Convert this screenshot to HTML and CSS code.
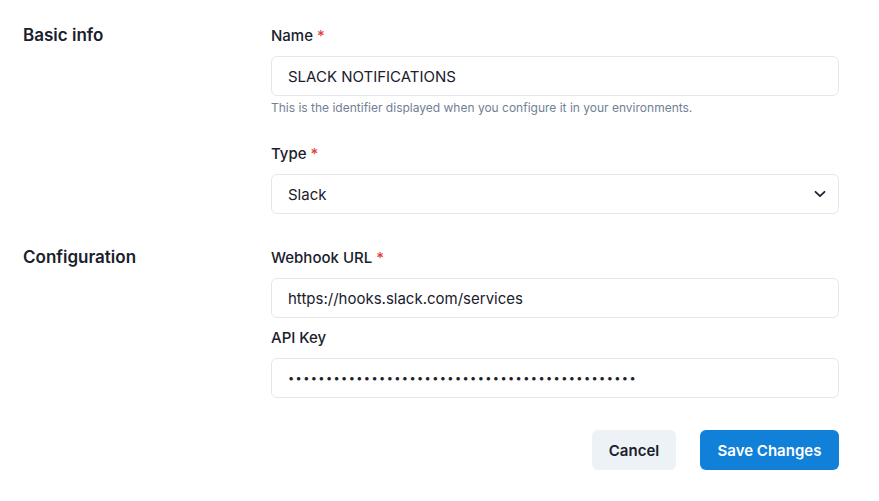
FILE: index.html
```html
<!DOCTYPE html>
<html>
<head>
<meta charset="utf-8">
<link rel="stylesheet" href="styles.css">
</head>
<body>
<form class="form">
  <section class="section">
    <h2 class="section-title">Basic info</h2>
    <div class="fields">
      <div class="field">
        <label class="label">Name <span class="req">*</span></label>
        <input class="input" type="text" value="SLACK NOTIFICATIONS">
        <p class="help">This is the identifier displayed when you configure it in your environments.</p>
      </div>
      <div class="field field-spaced">
        <label class="label">Type <span class="req">*</span></label>
        <div class="select">
          <span>Slack</span>
          <svg class="chev" width="12" height="8" viewBox="0 0 12 8"><path d="M1.5 1.8 6 6.2l4.5-4.4" fill="none" stroke="#1f2430" stroke-width="1.8" stroke-linecap="round" stroke-linejoin="round"/></svg>
        </div>
      </div>
    </div>
  </section>
  <section class="section section-2">
    <h2 class="section-title">Configuration</h2>
    <div class="fields">
      <div class="field">
        <label class="label">Webhook URL <span class="req">*</span></label>
        <input class="input" type="text" value="https://hooks.slack.com/services">
      </div>
      <div class="field field-tight">
        <label class="label">API Key</label>
        <input class="input pw" type="password" value="aaaaaaaaaaaaaaaaaaaaaaaaaaaaaaaaaaaaaaaaaaaaaa">
      </div>
    </div>
  </section>
  <div class="actions">
    <button type="button" class="btn btn-cancel">Cancel</button>
    <button type="button" class="btn btn-save">Save Changes</button>
  </div>
</form>
</body>
</html>
```
FILE: styles.css
```css
* { box-sizing: border-box; }
body {
  margin: 0;
  background: #ffffff;
  font-family: Inter, "Noto Sans", sans-serif;
  color: #1a202c;
}
.form {
  padding: 26px 40px 0 23px;
}
.section {
  display: flex;
}
.section-2 {
  margin-top: 34px;
}
.section-title {
  width: 248px;
  flex: none;
  margin: 0;
  font-size: 17px;
  line-height: 18px;
  font-weight: 600;
  color: #1a202c;
}
.fields {
  flex: 1;
  display: flex;
  flex-direction: column;
}
.field {
  display: flex;
  flex-direction: column;
}
.field-spaced { margin-top: 28px; }
.field-tight { margin-top: 10px; }
.label {
  font-size: 15px;
  line-height: 20px;
  font-weight: 500;
  margin-bottom: 10px;
  color: #1a202c;
}
.req { color: #e53e3e; }
.input, .select {
  width: 568px;
  height: 40px;
  border: 1px solid #e2e8f0;
  border-radius: 6px;
  padding: 0 16px;
  font-family: inherit;
  font-size: 15px;
  color: #1a202c;
  background: #fff;
  outline: none;
}
.select {
  display: flex;
  align-items: center;
  justify-content: space-between;
  padding-right: 12px;
}
.chev { display: block; }
.pw {
  font-size: 11px;
  letter-spacing: 1.4px;
}
.help {
  margin: 4px 0 0;
  font-size: 12px;
  line-height: 16px;
  color: #718096;
}
.actions {
  display: flex;
  justify-content: flex-end;
  gap: 24px;
  margin-top: 32px;
}
.btn {
  height: 40px;
  border: none;
  border-radius: 6px;
  font-family: inherit;
  font-size: 15px;
  font-weight: 600;
  padding: 0 16px;
  cursor: pointer;
}
.btn-cancel {
  background: #edf2f7;
  color: #1a202c;
  width: 84px;
}
.btn-save {
  background: #1180d8;
  color: #fff;
  width: 139px;
}
```
